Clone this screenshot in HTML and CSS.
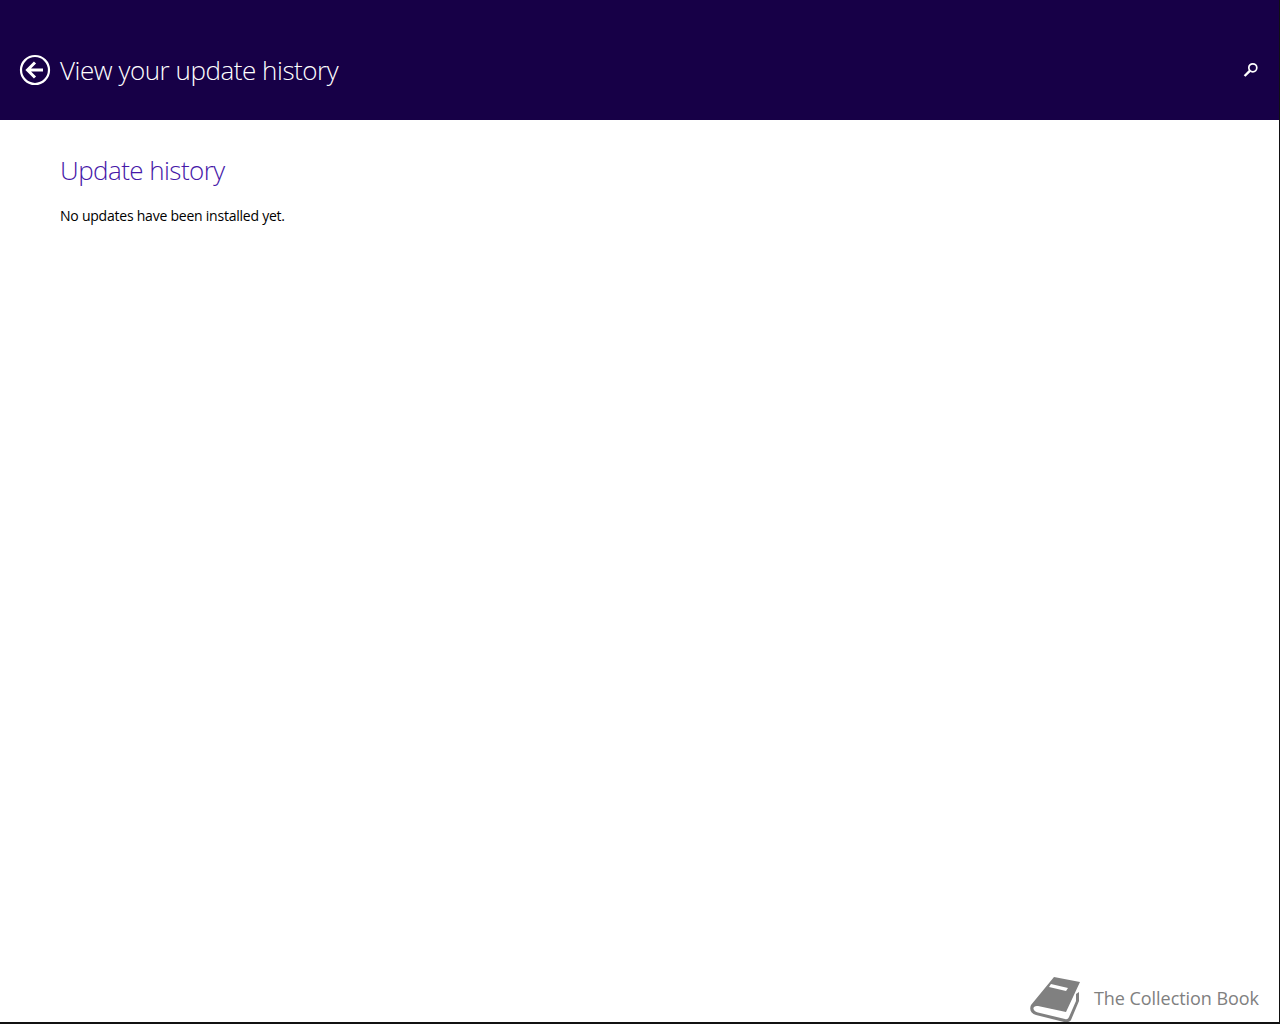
FILE: index.html
```html
<!DOCTYPE html>
<html lang="en">
<head>
    <meta charset="UTF-8">
    <title>View your update history</title>
    <link rel="stylesheet" href="styles.css">
</head>
<body>
    <div class="screen">
        <header class="header">
            <svg class="back-icon" width="32" height="32" viewBox="0 0 32 32">
                <circle cx="16" cy="16" r="14" fill="none" stroke="#fff" stroke-width="2.2"/>
                <path d="M16 8.5 L8.5 16 L16 23.5 M9 16 H24" fill="none" stroke="#fff" stroke-width="3"/>
            </svg>
            <h1 class="page-title">View your update history</h1>
            <svg class="search-icon" width="16" height="16" viewBox="0 0 16 16">
                <circle cx="9.8" cy="5.8" r="4" fill="none" stroke="#fff" stroke-width="1.7"/>
                <path d="M6.8 8.8 L1.6 14" fill="none" stroke="#fff" stroke-width="2.4"/>
            </svg>
        </header>

        <main class="content">
            <h2 class="section-title">Update history</h2>
            <p class="empty-text">No updates have been installed yet.</p>
        </main>

        <!-- watermark -->
        <div class="watermark">
            <svg width="52" height="48" viewBox="0 0 52 48">
                <path d="M25 3 L51 8 L37 38 L9 32 C6 31.5 4 33 4.5 35 C5 37 7 38 9 38.5 L36 45 C38 45.5 39 45 40 43 L47 27 L47 20 L50 18 L50 27 L42 46 C41 48 38 48.5 35 48 L7 41 C2 39.5 0 36 2 31 Z" fill="#808080"/>
                <path d="M22 10 L39 14 L37 17 L20 13 Z" fill="#fff"/>
            </svg>
            <span class="watermark-text">The Collection Book</span>
        </div>
    </div>
</body>
</html>
```

FILE: styles.css
```css
html, body {
    margin: 0;
    padding: 0;
    height: 100%;
    background-color: #fff;
}

body {
    font-family: "Open Sans", "Liberation Sans", sans-serif;
    overflow: hidden;
}

.screen {
    position: relative;
    box-sizing: border-box;
    height: 1024px;
    border-right: 1px solid #111;
    border-bottom: 2px solid #111;
}

.header {
    display: flex;
    align-items: center;
    box-sizing: border-box;
    height: 120px;
    padding: 20px 20px 0 19px;
    background-color: #170047;
    color: #fff;
}

.back-icon {
    margin-right: 9px;
}

.page-title {
    flex: 1;
    margin: 0;
    font-size: 26px;
    font-weight: 300;
    line-height: 60px;
    letter-spacing: -0.46px;
}

.content {
    padding: 30px 60px;
}

.section-title {
    margin: 0;
    font-size: 26px;
    font-weight: 300;
    line-height: 40px;
    letter-spacing: -0.56px;
    color: #4617a8;
}

.empty-text {
    margin: 16px 0 0;
    font-size: 14px;
    line-height: 20px;
    letter-spacing: -0.23px;
    color: #000;
}

.watermark {
    position: absolute;
    right: 20px;
    bottom: 0;
    display: flex;
    align-items: center;
    gap: 13px;
}

.watermark-text {
    font-size: 18px;
    letter-spacing: -0.05px;
    color: #808080;
}
```
